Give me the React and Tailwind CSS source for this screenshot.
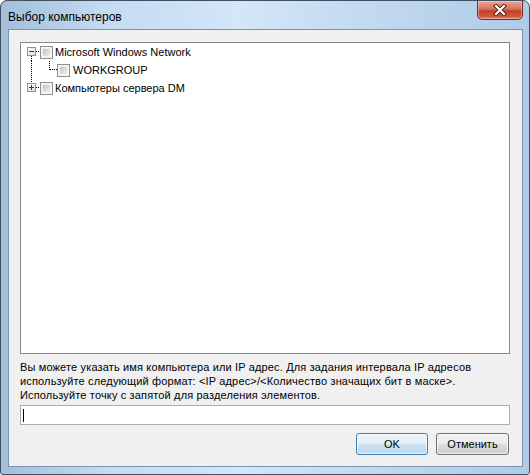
import React from "react";

const font = { fontFamily: '"Liberation Sans", Arial, sans-serif' };

function Checkbox({ x }) {
  return (
    <g>
      <rect x={x + 0.5} y={3.5} width={12} height={12} fill="url(#cbfill)" stroke="#8e8f8f" />
      <rect x={x + 1.5} y={4.5} width={10} height={10} fill="none" stroke="#f4f4f4" />
      <rect x={x + 3} y={6} width={7} height={7} fill="url(#cbinner)" />
    </g>
  );
}

function ExpBox({ plus }) {
  return (
    <g>
      <rect x={6.5} y={4.5} width={8} height={8} fill="url(#expfill)" stroke="#919191" />
      <line x1={8} y1={8.5} x2={13} y2={8.5} stroke="#1f3b70" />
      {plus && <line x1={10.5} y1={6} x2={10.5} y2={11} stroke="#1f3b70" />}
    </g>
  );
}

function Defs() {
  return (
    <svg width="0" height="0" className="absolute">
      <defs>
        <linearGradient id="cbfill" x1="0" y1="0" x2="1" y2="1">
          <stop offset="0" stopColor="#e8e8e8" />
          <stop offset="1" stopColor="#fbfbfb" />
        </linearGradient>
        <linearGradient id="cbinner" x1="0" y1="0" x2="1" y2="1">
          <stop offset="0" stopColor="#c4c4c4" />
          <stop offset="1" stopColor="#efefef" />
        </linearGradient>
        <linearGradient id="expfill" x1="0" y1="0" x2="1" y2="1">
          <stop offset="0" stopColor="#ffffff" />
          <stop offset="1" stopColor="#dcdcdc" />
        </linearGradient>
      </defs>
    </svg>
  );
}

export default function App() {
  return (
    <div
      className="relative w-[530px] h-[475px] flex flex-col border border-[#404e5e] rounded-t-[7px] rounded-b-[3px] overflow-hidden bg-[linear-gradient(to_right,#a3bfdc_0%,#c4dbf2_20%,#d4e6f8_45%,#c2d9f0_70%,#aecbe8_100%)]"
      style={font}
    >
      <Defs />
      <div className="flex justify-between items-start h-[28px] pl-[7px] pr-[6px]">
        <div className="text-[12px] leading-none text-black mt-[10px]">Выбор компьютеров</div>
        <div className="-mt-[1px] w-[46px] h-[20px] rounded-b-[5px] border border-[#6e2b22] bg-[linear-gradient(to_bottom,#e9a899_0%,#d4705e_45%,#c3402a_55%,#d2583c_85%,#e08a6c_100%)] flex items-center justify-center shadow-[inset_0_0_0_1px_rgba(255,255,255,0.35)]">
          <svg width="14" height="12" viewBox="0 0 14 12">
            <path d="M3 2 L11 10 M11 2 L3 10" stroke="#5a1e16" strokeWidth="4.2" strokeLinecap="square" />
            <path d="M3 2 L11 10 M11 2 L3 10" stroke="#ffffff" strokeWidth="2.2" strokeLinecap="square" />
          </svg>
        </div>
      </div>

      <div className="flex-1 ml-[7px] mr-[6px] mb-[7px] border border-[#7d94b0] bg-[#f0f0f0] flex flex-col pt-[12px] pl-[11px] pr-[12px] text-[11px] text-black">
        <div className="h-[312px] border border-[#828790] bg-white flex flex-col">
          <div className="flex items-center h-[18px]">
            <svg width="34" height="18" className="shrink-0">
              <line x1={10.5} y1={13} x2={10.5} y2={18} stroke="#000" strokeDasharray="1 1" />
              <line x1={15} y1={8.5} x2={19} y2={8.5} stroke="#000" strokeDasharray="1 1" />
              <ExpBox />
              <Checkbox x={19} />
            </svg>
            <span>Microsoft Windows Network</span>
          </div>
          <div className="flex items-center h-[18px]">
            <svg width="52" height="18" className="shrink-0">
              <line x1={10.5} y1={0} x2={10.5} y2={18} stroke="#000" strokeDasharray="1 1" />
              <line x1={28.5} y1={0} x2={28.5} y2={9} stroke="#000" strokeDasharray="1 1" />
              <line x1={29} y1={8.5} x2={36} y2={8.5} stroke="#000" strokeDasharray="1 1" />
              <Checkbox x={36} />
            </svg>
            <span>WORKGROUP</span>
          </div>
          <div className="flex items-center h-[18px]">
            <svg width="34" height="18" className="shrink-0">
              <line x1={10.5} y1={0} x2={10.5} y2={4} stroke="#000" strokeDasharray="1 1" />
              <line x1={15} y1={8.5} x2={19} y2={8.5} stroke="#000" strokeDasharray="1 1" />
              <ExpBox plus />
              <Checkbox x={19} />
            </svg>
            <span>Компьютеры сервера DM</span>
          </div>
        </div>

        <div className="mt-[6px] leading-[14px] tracking-[0.15px]">
          <div>Вы можете указать имя компьютера или IP адрес. Для задания интервала IP адресов</div>
          <div>используйте следующий формат: &lt;IP адрес&gt;/&lt;Количество значащих бит в маске&gt;.</div>
          <div>Используйте точку с запятой для разделения элементов.</div>
        </div>

        <div className="mt-[3px] h-[20px] border border-[#abadb3] bg-white flex items-center pl-[2px]">
          <div className="w-[1px] h-[13px] bg-black" />
        </div>

        <div className="mt-[8px] flex justify-end gap-[8px] pr-[1px]">
          <div className="w-[72px] h-[22px] rounded-[3px] border border-[#3c7fb1] bg-[linear-gradient(to_bottom,#edf5fb_0%,#e2eef8_50%,#cfe3f3_50%,#bcd6ec_100%)] flex items-center justify-center shadow-[inset_0_0_0_1px_rgba(255,255,255,0.7)]">
            OK
          </div>
          <div className="w-[73px] h-[22px] rounded-[3px] border border-[#707070] bg-[linear-gradient(to_bottom,#f2f2f2_0%,#ebebeb_50%,#dddddd_50%,#cfcfcf_100%)] flex items-center justify-center shadow-[inset_0_0_0_1px_rgba(255,255,255,0.7)]">
            Отменить
          </div>
        </div>
      </div>
    </div>
  );
}
